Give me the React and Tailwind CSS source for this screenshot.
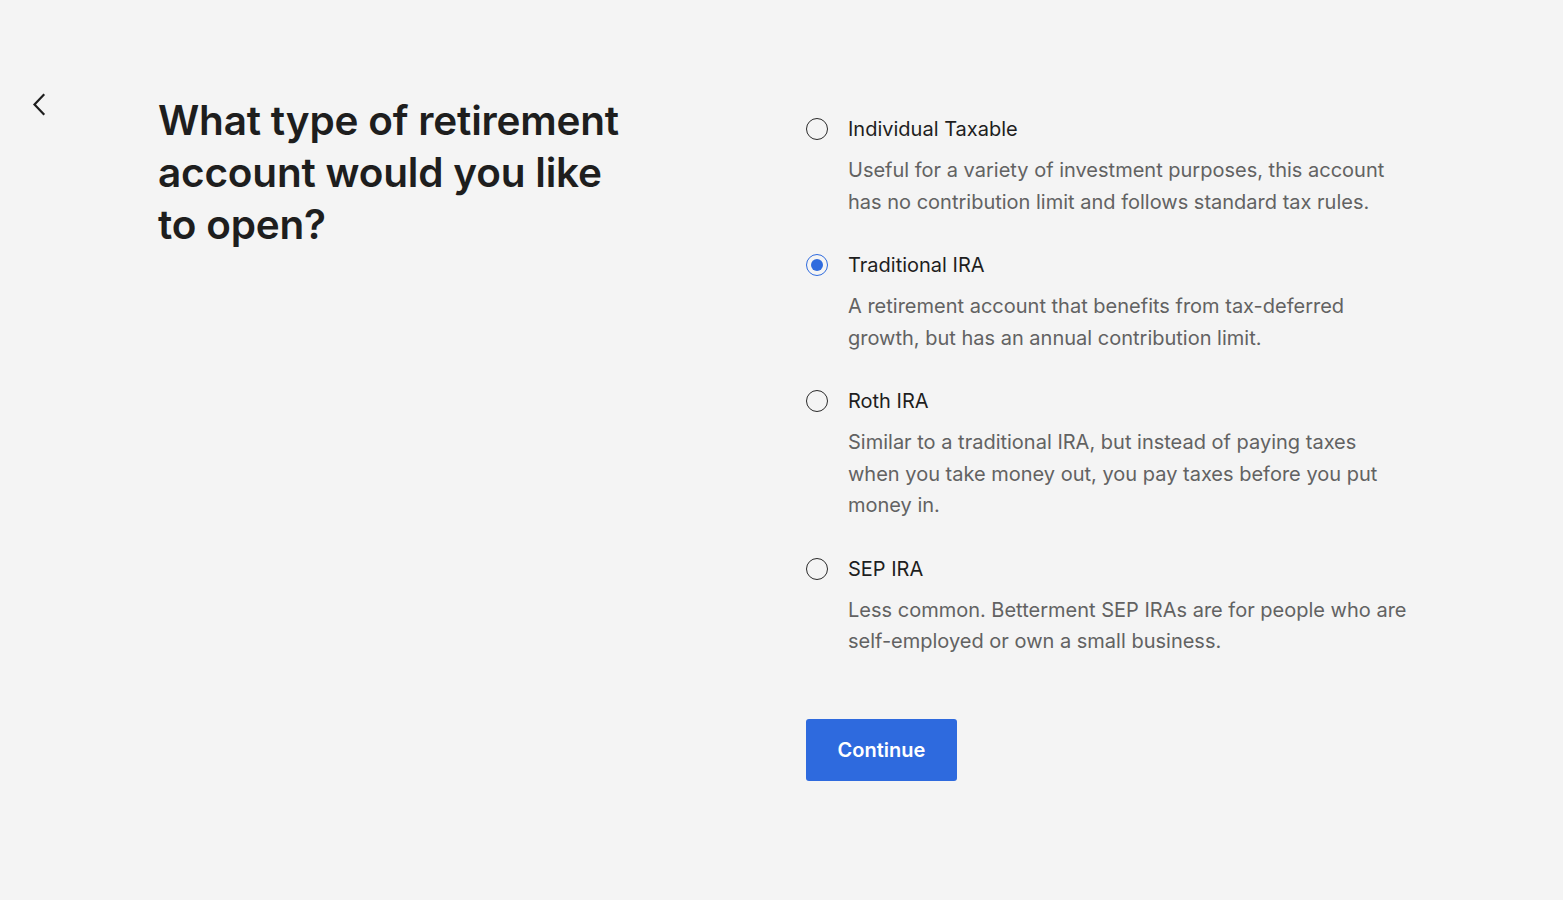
import React, { useState } from 'react';

const options = [
  {
    id: 'individual',
    label: 'Individual Taxable',
    desc: 'Useful for a variety of investment purposes, this account has no contribution limit and follows standard tax rules.',
  },
  {
    id: 'traditional',
    label: 'Traditional IRA',
    desc: 'A retirement account that benefits from tax-deferred growth, but has an annual contribution limit.',
  },
  {
    id: 'roth',
    label: 'Roth IRA',
    desc: 'Similar to a traditional IRA, but instead of paying taxes when you take money out, you pay taxes before you put money in.',
  },
  {
    id: 'sep',
    label: 'SEP IRA',
    desc: 'Less common. Betterment SEP IRAs are for people who are self-employed or own a small business.',
  },
];

const Radio = ({ checked }) => (
  <span
    className={
      'flex h-[22px] w-[22px] shrink-0 items-center justify-center rounded-full border-[1.5px] ' +
      (checked ? 'border-[#2f6bde]' : 'border-[#2a2a2a]')
    }
  >
    {checked && <span className="h-[12px] w-[12px] rounded-full bg-[#2f6bde]" />}
  </span>
);

export default function App() {
  const [selected, setSelected] = useState('traditional');

  return (
    <div
      className="min-h-[900px] w-full bg-[#f4f4f4] text-[#1e1e1e]"
      style={{ fontFamily: 'Inter, "Liberation Sans", sans-serif' }}
    >
      <div className="flex pt-[92px]">
        <button className="ml-[28px] h-[24px] w-[24px] shrink-0 text-[#1e1e1e]">
          <svg width="24" height="24" viewBox="0 0 24 24" fill="none" stroke="currentColor" strokeWidth="2.2" strokeLinecap="square">
            <path d="M15.5 3 L6.5 12.5 L15.5 22" />
          </svg>
        </button>

        <div className="ml-[106px] w-[648px] shrink-0">
          <h1 className="mt-[3px] w-[480px] text-[40.5px] font-semibold leading-[52px] tracking-[-0.2px]">
            What type of retirement account would you like to open?
          </h1>
        </div>

        <div className="flex flex-col">
          <div className="flex flex-col gap-[33px] pt-[23px]">
            {options.map((o) => (
              <div key={o.id} className="cursor-pointer" onClick={() => setSelected(o.id)}>
                <div className="flex items-center gap-[20px]">
                  <Radio checked={selected === o.id} />
                  <span className="text-[20px] leading-[28px] text-[#1e1e1e]">{o.label}</span>
                </div>
                <p className="mt-[12px] ml-[42px] w-[562px] text-[20px] leading-[31.5px] text-[#626262]">
                  {o.desc}
                </p>
              </div>
            ))}
          </div>

          <button className="mt-[61px] h-[62px] w-[151px] rounded-[3px] bg-[#2e6ade] text-[20px] font-semibold text-white">
            Continue
          </button>
        </div>
      </div>
    </div>
  );
}
